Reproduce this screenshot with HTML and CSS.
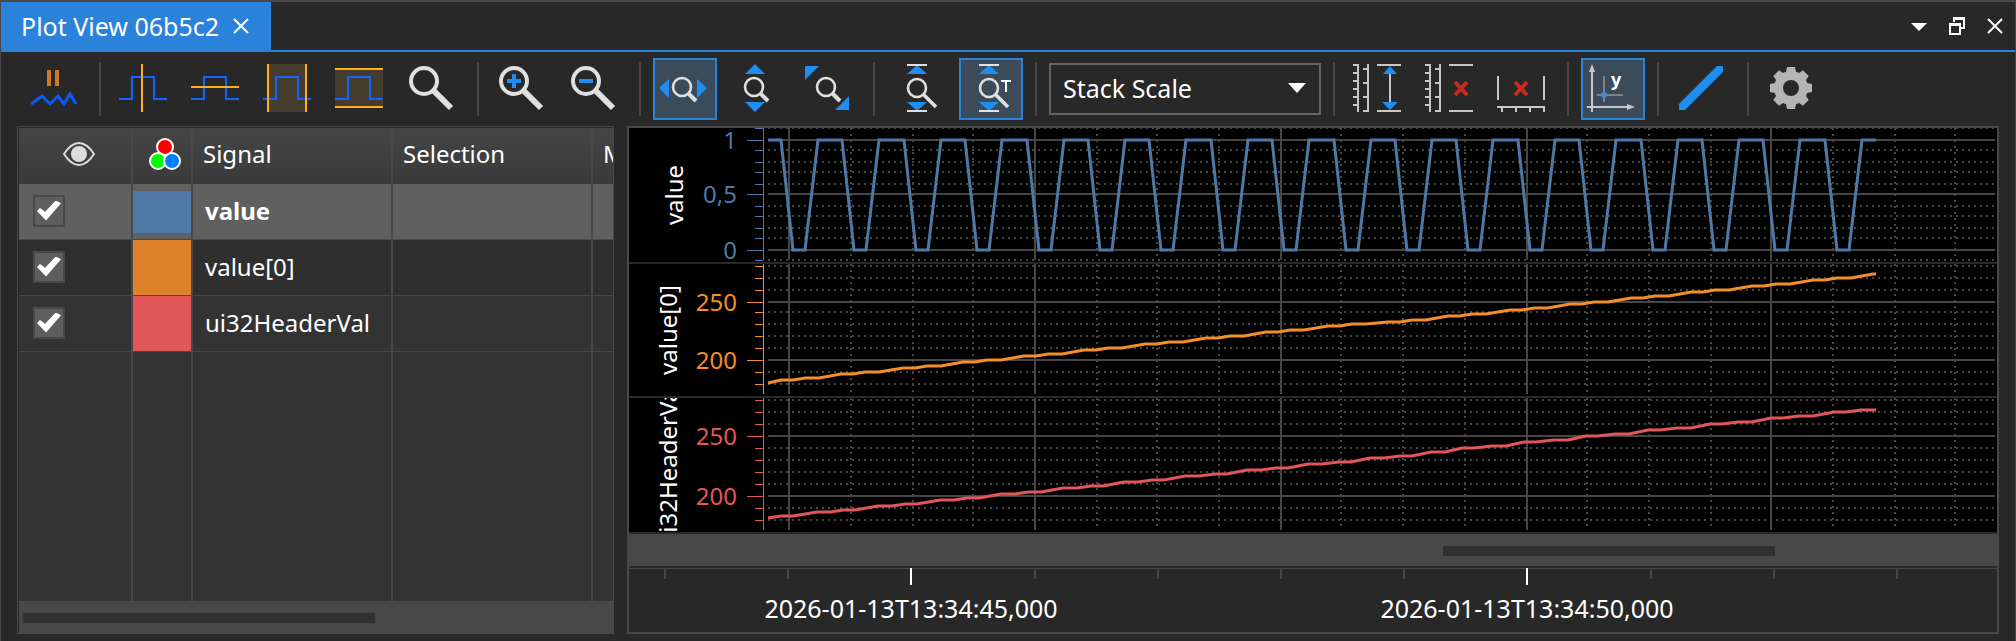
FILE: index.html
```
<!DOCTYPE html>
<html lang="en">
<head>
    <meta charset="UTF-8">
    <meta name="viewport" content="width=device-width, initial-scale=1.0">
    <title>Plot View</title>
    <link rel="stylesheet" href="styles.css">
</head>
<body>
    <svg class="defs" width="0" height="0" aria-hidden="true">
        <symbol id="pulse" viewBox="0 0 48 48">
            <path d="M0 35h13V13h22v22h13" fill="none" stroke="#1464ff" stroke-width="2"/>
        </symbol>
        <symbol id="lens" viewBox="0 0 48 48">
            <circle cx="17" cy="17" r="13" fill="none" stroke="#e0e0e0" stroke-width="4"/>
            <path d="M26 26L44 44" stroke="#e0e0e0" stroke-width="6"/>
        </symbol>
        <symbol id="lens-small" viewBox="0 0 48 48">
            <circle cx="23" cy="23" r="9" fill="none" stroke="#e0e0e0" stroke-width="2.6"/>
            <path d="M29 29L37 37" stroke="#e0e0e0" stroke-width="4"/>
        </symbol>
        <symbol id="fit-height" viewBox="0 0 48 48">
            <path d="M24 1L34 10H14zM14 38h20l-10 9z" fill="#1e8cf0"/>
            <path d="M14 1h20M14 47h20" stroke="#e0e0e0" stroke-width="2"/>
            <circle cx="24" cy="24" r="9" fill="none" stroke="#e0e0e0" stroke-width="2.6"/>
            <path d="M30 30L43 43" stroke="#e0e0e0" stroke-width="3.6"/>
        </symbol>
        <symbol id="rulers" viewBox="0 0 48 48">
            <path d="M5 0v48M15 0v48M0 1h5M0 9h5M0 17h5M0 25h5M0 33h5M0 41h5M10 5h5M10 19h5M10 33h5M10 47h5M24 1h24M24 47h24" fill="none" stroke="#c8c8c8" stroke-width="2"/>
        </symbol>
    </svg>

    <header class="tabbar">
        <div class="tab">
            <span>Plot View 06b5c2</span>
            <button class="icon-btn" aria-label="Close tab">
                <svg width="16" height="16"><path d="M1 1L15 15M15 1L1 15" stroke="#fff" stroke-width="2"/></svg>
            </button>
        </div>
        <div class="window-buttons">
            <button class="icon-btn" aria-label="Menu">
                <svg width="16" height="18"><path d="M0 6h16l-8 8z" fill="#fff"/></svg>
            </button>
            <button class="icon-btn" aria-label="Restore">
                <svg width="16" height="18">
                    <path d="M5 5V1h10v10h-4M5 2h10" fill="none" stroke="#fff" stroke-width="2"/>
                    <path d="M1 7h10v10H1zM1 8h10" fill="none" stroke="#fff" stroke-width="2"/>
                </svg>
            </button>
            <button class="icon-btn" aria-label="Close">
                <svg width="16" height="18"><path d="M1 2L15 16M15 2L1 16" stroke="#fff" stroke-width="2"/></svg>
            </button>
        </div>
    </header>

    <div class="toolbar">
        <button class="tool" aria-label="Pause">
            <svg viewBox="0 0 48 48">
                <path d="M18 6h4v16h-4zM26 6h4v16h-4z" fill="#d47823"/>
                <path d="M2 40l11-8 8 8 8-8 6 8 6-10 6 10" fill="none" stroke="#0a5af5" stroke-width="3"/>
            </svg>
        </button>
        <span class="separator"></span>
        <button class="tool" aria-label="Vertical cursor">
            <svg viewBox="0 0 48 48"><use href="#pulse"/><path d="M23 0v48" stroke="#ffaf1e" stroke-width="2"/></svg>
        </button>
        <button class="tool" aria-label="Horizontal cursor">
            <svg viewBox="0 0 48 48"><use href="#pulse"/><path d="M0 23h48" stroke="#ffaf1e" stroke-width="2"/></svg>
        </button>
        <button class="tool" aria-label="Vertical band">
            <svg viewBox="0 0 48 48">
                <path d="M4 0h40v48H4z" fill="#463c2d"/><use href="#pulse"/>
                <path d="M5 0v48M43 0v48" stroke="#ffaf1e" stroke-width="2"/>
            </svg>
        </button>
        <button class="tool" aria-label="Horizontal band">
            <svg viewBox="0 0 48 48">
                <path d="M0 4h48v40H0z" fill="#463c2d"/><use href="#pulse"/>
                <path d="M0 5h48M0 43h48" stroke="#ffaf1e" stroke-width="2"/>
            </svg>
        </button>
        <button class="tool" aria-label="Zoom">
            <svg viewBox="0 0 48 48"><use href="#lens"/></svg>
        </button>
        <span class="separator"></span>
        <button class="tool" aria-label="Zoom in">
            <svg viewBox="0 0 48 48"><use href="#lens"/><path d="M10 17h14M17 10v14" stroke="#1e8cf0" stroke-width="4"/></svg>
        </button>
        <button class="tool" aria-label="Zoom out">
            <svg viewBox="0 0 48 48"><use href="#lens"/><path d="M10 17h14" stroke="#1e8cf0" stroke-width="4"/></svg>
        </button>
        <span class="separator"></span>
        <button class="tool checked" aria-label="Zoom horizontally">
            <svg viewBox="0 0 48 48"><path d="M10 15v19L0 24zM38 15v19l10-10z" fill="#1e8cf0"/><use href="#lens-small"/></svg>
        </button>
        <button class="tool" aria-label="Zoom vertically">
            <svg viewBox="0 0 48 48"><path d="M24 0l10 10H14zM14 38h20L24 48z" fill="#1e8cf0"/><use href="#lens-small"/></svg>
        </button>
        <button class="tool" aria-label="Zoom both">
            <svg viewBox="0 0 48 48"><path d="M2 2h14L2 16zM46 32v14H32z" fill="#1e8cf0"/><use href="#lens-small"/></svg>
        </button>
        <span class="separator"></span>
        <button class="tool" aria-label="Fit height">
            <svg viewBox="0 0 48 48"><use href="#fit-height"/></svg>
        </button>
        <button class="tool checked" aria-label="Fit height over time">
            <svg viewBox="0 0 48 48"><use href="#fit-height"/><path d="M36 17h10M41 17v11" stroke="#fff" stroke-width="2"/></svg>
        </button>
        <span class="separator"></span>
        <div class="combo">
            <select aria-label="Scale mode">
                <option>Stack Scale</option>
            </select>
            <svg class="combo-arrow" width="18" height="10"><path d="M0 0h18l-9 10z" fill="#fff"/></svg>
        </div>
        <span class="separator"></span>
        <button class="tool" aria-label="Fit Y axis">
            <svg viewBox="0 0 48 48">
                <use href="#rulers"/><path d="M37 8v32" stroke="#c8c8c8" stroke-width="2"/>
                <path d="M37 2l7 8H30zM37 46l-8-8h16z" fill="#1e8cf0"/>
            </svg>
        </button>
        <button class="tool" aria-label="Reset Y axis">
            <svg viewBox="0 0 48 48"><use href="#rulers"/><path d="M30 18l12 13M42 18L30 31" stroke="#c82a1e" stroke-width="4"/></svg>
        </button>
        <button class="tool" aria-label="Reset X axis">
            <svg viewBox="0 0 48 48">
                <path d="M1 12v24M47 12v24M0 43h48M5 43v5M19 43v5M33 43v5M47 43v5" stroke="#c8c8c8" stroke-width="2"/>
                <path d="M18 18l12 13M30 18L18 31" stroke="#c82a1e" stroke-width="4"/>
            </svg>
        </button>
        <span class="separator"></span>
        <button class="tool checked" aria-label="Show value at cursor">
            <svg viewBox="0 0 48 48">
                <path d="M5 5v43M0 43h42" stroke="#c8c8c8" stroke-width="2"/>
                <path d="M5 0l3 8H2zM48 43l-8 3v-6z" fill="#c8c8c8"/>
                <path d="M17 12v26M10 31h26" stroke="#828282" stroke-width="2"/>
                <circle cx="17" cy="31" r="3" fill="#4687dc"/>
                <text class="tool-text" x="24" y="22">y</text>
            </svg>
        </button>
        <span class="separator"></span>
        <button class="tool" aria-label="Line style">
            <svg viewBox="0 0 48 48"><path d="M2 46v-6L40 2h6v6L8 46z" fill="#1e8cf0"/></svg>
        </button>
        <span class="separator"></span>
        <button class="tool" aria-label="Settings">
            <svg viewBox="0 0 48 48">
                <g fill="#b4b4b4">
                    <path id="cog" d="M19 8l1-5h8l1 5v32l-1 5h-8l-1-5z"/>
                    <use href="#cog" transform="rotate(45 24 24)"/>
                    <use href="#cog" transform="rotate(90 24 24)"/>
                    <use href="#cog" transform="rotate(135 24 24)"/>
                    <circle cx="24" cy="24" r="17"/>
                </g>
                <circle cx="24" cy="24" r="8" fill="#282828"/>
            </svg>
        </button>
    </div>

    <main class="content">
        <section class="signals">
            <table>
                <colgroup>
                    <col class="col-visible"><col class="col-color"><col class="col-name"><col class="col-name"><col>
                </colgroup>
                <thead>
                    <tr>
                        <th class="visible-head" aria-label="Visible">
                            <svg width="32" height="24">
                                <path d="M1 12Q8 1 16 1T31 12Q24 23 16 23T1 12z" fill="none" stroke="#dcdcdc" stroke-width="2"/>
                                <circle cx="16" cy="12" r="8" fill="#dcdcdc"/>
                            </svg>
                        </th>
                        <th class="color-head" aria-label="Color">
                            <svg width="32" height="34">
                                <g stroke="#fff" stroke-width="2">
                                    <circle cx="16" cy="10" r="8" fill="#f00"/>
                                    <circle cx="9" cy="24" r="8" fill="#0f0"/>
                                    <circle cx="23" cy="24" r="8" fill="#0080ff"/>
                                </g>
                            </svg>
                        </th>
                        <th>Signal</th>
                        <th>Selection</th>
                        <th>M</th>
                    </tr>
                </thead>
                <tbody>
                    <tr class="selected">
                        <td><input type="checkbox" aria-label="value" checked></td>
                        <td class="color"><div class="swatch blue"></div></td>
                        <td>value</td><td></td><td></td>
                    </tr>
                    <tr>
                        <td><input type="checkbox" aria-label="value[0]" checked></td>
                        <td class="color"><div class="swatch orange"></div></td>
                        <td>value[0]</td><td></td><td></td>
                    </tr>
                    <tr class="odd">
                        <td><input type="checkbox" aria-label="ui32HeaderVal" checked></td>
                        <td class="color"><div class="swatch red"></div></td>
                        <td>ui32HeaderVal</td><td></td><td></td>
                    </tr>
                    <tr class="filler"><td></td><td></td><td></td><td></td><td></td></tr>
                </tbody>
            </table>
            <div class="scrollbar"><div class="thumb"></div></div>
        </section>

        <section class="plot">
            <svg class="pane blue" id="pane-0" height="134"></svg>
            <svg class="pane orange" id="pane-1" height="132"></svg>
            <svg class="pane red" id="pane-2" height="134"></svg>
            <div class="scrollbar"><div class="thumb"></div></div>
            <svg class="time-axis" id="time-axis"></svg>
        </section>
    </main>

    <script src="plot.js"></script>
</body>
</html>
```
FILE: styles.css
```
* {
    box-sizing: border-box;
}
body {
    margin: 0;
    min-height: 100vh;
    display: flex;
    flex-direction: column;
    border: 1px solid #484848;
    border-top-width: 2px;
    border-bottom: 0;
    background-color: #282828;
    color: #fff;
    font-family: "Noto Sans", sans-serif;
    font-size: 25px;
}
.defs {
    position: absolute;
}
button {
    border: 0;
    padding: 0;
    background: none;
    cursor: pointer;
}
svg {
    display: block;
}

/* tab bar */
.tabbar {
    display: flex;
    justify-content: space-between;
    height: 50px;
    border-bottom: 2px solid #2a82da;
}
.tab {
    display: flex;
    align-items: center;
    gap: 14px;
    height: 50px;
    padding: 0 22px 2px 20px;
    background-color: #2a82da;
}
.window-buttons {
    display: flex;
    align-items: center;
    gap: 22px;
    padding-right: 12px;
}

/* toolbar */
.toolbar {
    display: flex;
    align-items: center;
    gap: 8px;
    padding: 6px 22px;
}
.tool {
    flex: none;
    width: 64px;
    height: 62px;
    padding: 4px 8px 6px 4px;
    border: 2px solid transparent;
}
.tool svg {
    width: 48px;
    height: 48px;
}
.tool.checked {
    border-color: #2a82da;
    background-color: #3c4b5a;
}
.tool-text {
    fill: #fff;
    font: bold 18px "Noto Sans", sans-serif;
}
.separator {
    flex: none;
    width: 2px;
    height: 54px;
    margin: 0 4px;
    background-color: #484848;
}
.combo {
    position: relative;
    width: 272px;
}
.combo select {
    appearance: none;
    display: block;
    width: 100%;
    height: 52px;
    padding: 0 12px 2px;
    border: 2px solid #646464;
    border-radius: 0;
    background-color: #282828;
    color: #fff;
    font: inherit;
}
.combo-arrow {
    position: absolute;
    right: 15px;
    top: 20px;
    pointer-events: none;
}

/* main area */
.content {
    flex: 1;
    display: flex;
    gap: 13px;
    padding: 0 16px 7px;
}
.scrollbar {
    flex: none;
    background-color: #484848;
}
.thumb {
    height: 10px;
    background-color: #303030;
}

/* signal list */
.signals {
    flex: none;
    width: 597px;
    display: flex;
    flex-direction: column;
    border: 1px solid #484848;
    padding: 1px 0 0 1px;
    font-size: 24px;
}
.signals table {
    flex: 1 0 auto;
    width: 100%;
    height: 472px;
    table-layout: fixed;
    border-collapse: separate;
    border-spacing: 0;
    background-color: #333;
}
.col-visible {
    width: 114px;
}
.col-color {
    width: 60px;
}
.col-name {
    width: 200px;
}
.signals th {
    height: 56px;
    padding: 0 10px 6px;
    border-right: 2px solid #484848;
    background-image: linear-gradient(#454545, #3a3a3a);
    font-weight: normal;
    text-align: left;
    white-space: nowrap;
    overflow: hidden;
}
.signals td {
    height: 56px;
    padding: 0 12px 2px;
    border-right: 2px solid #484848;
    border-bottom: 1px solid #484848;
    background-color: #2f2f2f;
}
.signals th:last-child, .signals td:last-child {
    border-right: 0;
}
.signals .visible-head {
    padding: 0 0 4px 44px;
}
.signals .color-head {
    padding: 0 0 4px 16px;
}
.signals .odd td, .signals .filler td {
    background-color: #333;
}
.signals .filler td {
    height: auto;
    border-bottom: 0;
}
.signals .selected td {
    background-color: #606060;
    font-weight: bold;
}
.signals .color {
    padding: 0;
}
.swatch {
    height: 55px;
}
.selected .swatch {
    height: 42px;
}
.swatch.blue {
    background-color: #4e79a7;
}
.swatch.orange {
    background-color: #dc8228;
}
.swatch.red {
    background-color: #e15759;
}
input[type="checkbox"] {
    appearance: none;
    display: block;
    width: 32px;
    height: 32px;
    margin: 0 2px;
    border: 2px solid #484848;
    background-color: #5e5e5e;
}
input[type="checkbox"]:checked::before {
    content: "";
    display: block;
    width: 24px;
    height: 20px;
    margin: 4px 2px;
    background-color: #fff;
    clip-path: polygon(0 54%, 12% 38%, 34% 56%, 78% 0, 100% 14%, 38% 100%);
}
.signals .scrollbar {
    padding: 12px 4px 10px;
}
.signals .thumb {
    width: 352px;
}

/* plot */
.plot {
    flex: 1;
    min-width: 0;
    display: flex;
    flex-direction: column;
    border: 2px solid #484848;
}
.pane {
    flex: none;
    width: 100%;
    box-sizing: content-box;
    border-bottom: 2px solid #282828;
    background-color: #000;
    font-size: 24px;
}
.pane.blue {
    color: #4e79a7;
}
.pane.orange {
    color: #f28e2b;
}
.pane.red {
    color: #e15759;
}
.grid-solid {
    stroke: #464646;
    stroke-width: 2;
}
.grid-dotted {
    stroke: #464646;
    stroke-width: 2;
    stroke-dasharray: 2 4;
}
.axis-line {
    stroke: currentColor;
    stroke-width: 1;
}
.axis-value {
    fill: currentColor;
    text-anchor: end;
}
.axis-name, .time-label {
    fill: #fff;
    text-anchor: middle;
}
.curve {
    fill: none;
    stroke: currentColor;
    stroke-width: 3;
}
.plot .scrollbar {
    display: flex;
    justify-content: flex-end;
    padding: 12px 222px 10px 0;
}
.plot .thumb {
    width: 332px;
}
.time-axis {
    flex: 1 0 66px;
    width: 100%;
    height: 66px;
}
.time-base {
    stroke: #484848;
    stroke-width: 1;
}
.time-major {
    stroke: #fff;
    stroke-width: 2;
}
```
FILE: plot.js
```
const SVG_NS = 'http://www.w3.org/2000/svg';
const PLOT_LEFT = 139;
const PERIOD = 61.4;
const FIRST_EDGE = 152;
const LAST_X = 1247;

function add(parent, tag, attrs, text) {
    const el = document.createElementNS(SVG_NS, tag);
    for (const name in attrs) {
        el.setAttribute(name, attrs[name]);
    }
    if (text) {
        el.textContent = text;
    }
    parent.appendChild(el);
}

function line(parent, cls, x1, y1, x2, y2) {
    add(parent, 'line', { class: cls, x1: x1, y1: y1, x2: x2, y2: y2 });
}

// Cuts the samples at LAST_X and holds the last value up to it
function points(samples) {
    const seen = samples.filter(p => p[0] < LAST_X);
    seen.push([LAST_X, seen[seen.length - 1][1]]);
    return seen.map(p => p.join(',')).join(' ');
}

const even = v => Math.round(v / 2) * 2;

const square = [[PLOT_LEFT, 12]];
const ramp = [[PLOT_LEFT, 119]];
const header = [[PLOT_LEFT, 120]];
for (let n = 0; n < 19; n++) {
    const t = Math.round(FIRST_EDGE + n * PERIOD);
    square.push([t, 12], [t + 12, 122], [t + 24, 122], [t + 37, 12]);

    const r = t - Math.round(n * 0.7);
    const ry = 116 - n * 5.9;
    ramp.push([r, even(ry)], [r + 12, even(ry)], [r + 24, even(ry - 2)], [r + 38, even(ry - 2)]);

    const h = t + Math.round(n * 0.5);
    const hy = 118 - n * 6.1;
    header.push([h, even(hy)], [h + 12, even(hy)], [t + 36, 114 - n * 6], [t + 50, 114 - n * 6]);
}

const panes = [
    {
        name: 'value', nameX: 54, height: 134, samples: square,
        major: [[12, '1'], [66, '0,5'], [122, '0']],
        minor: [0, 22, 34, 44, 56, 78, 88, 100, 110, 132]
    },
    {
        name: 'value[0]', nameX: 48, height: 132, samples: ramp,
        major: [[38, '250'], [96, '200']],
        minor: [2, 14, 26, 48, 60, 72, 84, 108, 120]
    },
    {
        name: 'ui32HeaderVal', nameX: 48, height: 134, samples: header,
        major: [[38, '250'], [98, '200']],
        minor: [2, 14, 26, 50, 62, 74, 86, 110, 122]
    }
];

panes.forEach((pane, index) => {
    const svg = document.getElementById('pane-' + index);
    const bottom = pane.height - 2;

    // The grid stops 2px before the frame
    const grid = document.createElementNS(SVG_NS, 'svg');
    grid.setAttribute('x', PLOT_LEFT);
    grid.setAttribute('width', svg.getBoundingClientRect().width - PLOT_LEFT - 2);
    svg.appendChild(grid);
    pane.minor.forEach(y => line(grid, 'grid-dotted', 0, y, '100%', y));
    for (let n = 0; n < 20; n++) {
        const x = even(20.3 + n * PERIOD) + 1;
        line(grid, n % 4 ? 'grid-dotted' : 'grid-solid', x, 0, x, bottom);
    }
    pane.major.forEach(([y]) => line(grid, 'grid-solid', 0, y, '100%', y));

    // Y axis
    line(svg, 'axis-line', 134.5, 0, 134.5, bottom);
    pane.minor.forEach(y => line(svg, 'axis-line', 126, y + 0.5, 134, y + 0.5));
    pane.major.forEach(([y, label]) => {
        line(svg, 'axis-line', 118, y + 0.5, 134, y + 0.5);
        add(svg, 'text', { class: 'axis-value', x: 108, y: y + 9 }, label);
    });
    const middle = pane.height / 2;
    add(svg, 'text', {
        class: 'axis-name', x: pane.nameX, y: middle,
        transform: 'rotate(-90 ' + pane.nameX + ' ' + middle + ')'
    }, pane.name);

    add(svg, 'polyline', { class: 'curve', points: points(pane.samples) });
});

// Time axis, a major tick every 5 seconds
const axis = document.getElementById('time-axis');
line(axis, 'time-base', 0, 2.5, '100%', 2.5);
for (let n = 0; n < 11; n++) {
    const x = Math.round(36 + n * 123.2);
    const major = n % 5 === 2;
    line(axis, major ? 'time-major' : 'grid-solid', x, 2, x, major ? 19 : 13);
}
['2026-01-13T13:34:45,000', '2026-01-13T13:34:50,000', '2026-01-13T13:34:55,000'].forEach((label, i) => {
    add(axis, 'text', { class: 'time-label', x: 282 + i * 616, y: 52 }, label);
});
```
